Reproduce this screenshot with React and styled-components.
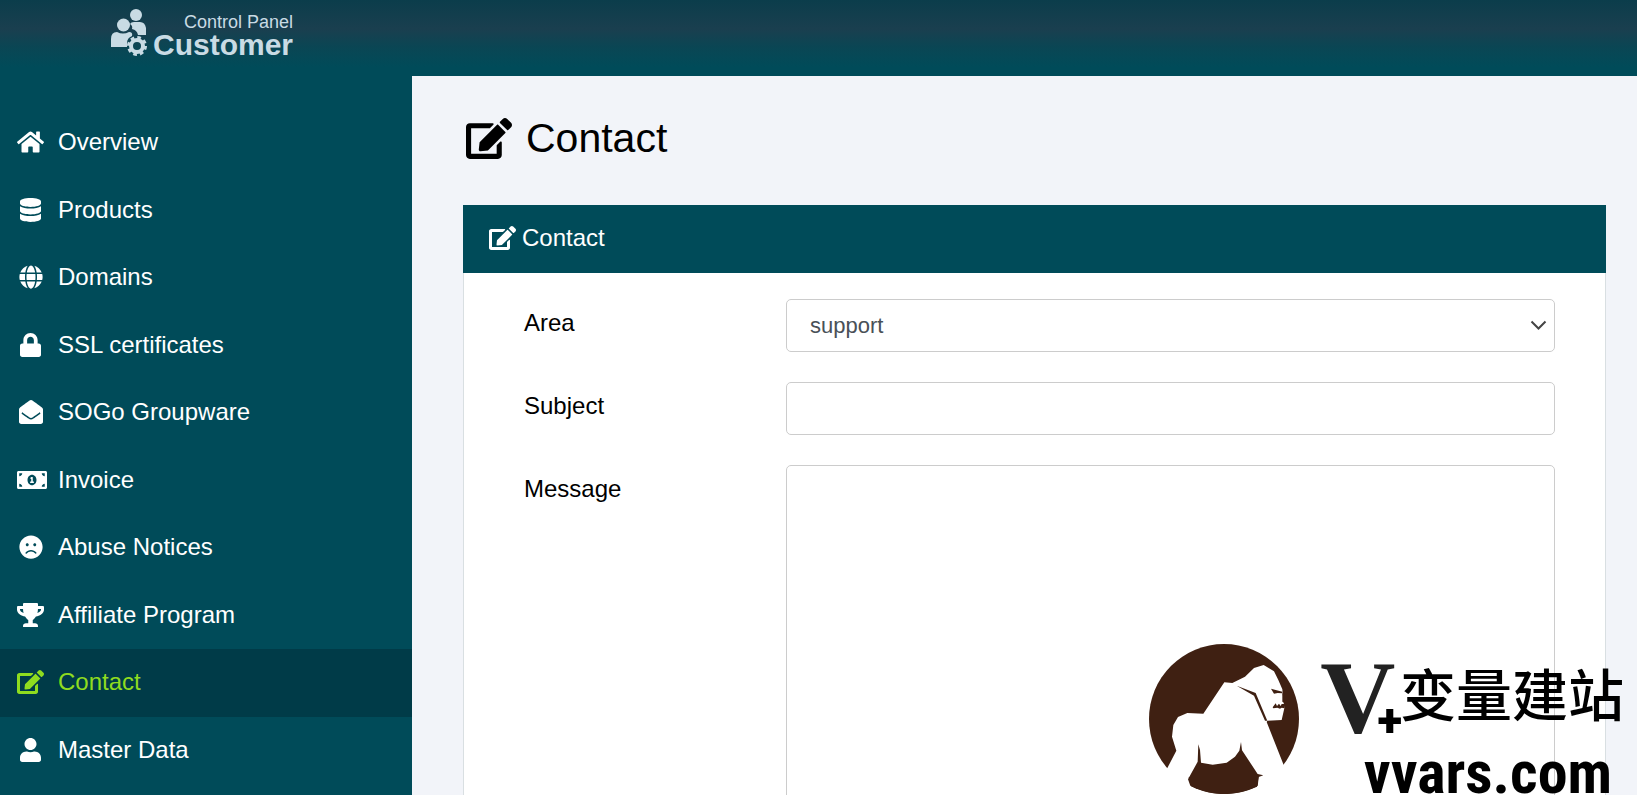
import React, { useState } from "react";
import styled, { createGlobalStyle } from "styled-components";
import {
  FaHome,
  FaDatabase,
  FaGlobe,
  FaLock,
  FaEnvelopeOpen,
  FaMoneyBillAlt,
  FaFrown,
  FaTrophy,
  FaEdit,
  FaUser,
} from "react-icons/fa";

const GlobalStyle = createGlobalStyle`
  * {
    box-sizing: border-box;
  }

  body {
    margin: 0;
    background: #f2f4f9;
    color: #000;
    font-family: "Liberation Sans", Arial, sans-serif;
    font-size: 24px;
    line-height: 28px;
  }
`;

const Page = styled.div`
  height: 100vh;
  display: flex;
  flex-direction: column;
  overflow: hidden;
`;

const TopBar = styled.header`
  flex: none;
  height: 76px;
  padding: 9px 111px;
  background: linear-gradient(#0b3d4b 0%, #1a3f4f 38%, #0a4654 62%, #004b59 88%);
`;

const Brand = styled.a`
  display: inline-flex;
  color: #c9dbe4;
  text-decoration: none;
`;

const BrandIcon = styled.svg`
  width: 36px;
  height: 47px;
  margin-right: 6px;
`;

const BrandText = styled.span`
  display: flex;
  flex-direction: column;
  align-items: flex-end;
  padding-top: 3px;
`;

const BrandSmall = styled.span`
  font-size: 18px;
  line-height: 20px;
`;

const BrandBig = styled.span`
  font-size: 30px;
  font-weight: bold;
  line-height: 26px;
`;

const Body = styled.div`
  flex: 1;
  min-height: 0;
  display: flex;
`;

const Sidebar = styled.nav`
  flex: none;
  width: 412px;
  padding-top: 33px;
  background: #004b59;
  overflow: hidden;
`;

const Menu = styled.ul`
  display: grid;
  grid-auto-rows: 1fr;
  min-height: 675px;
  margin: 0;
  padding: 0;
  list-style: none;
`;

const MenuLink = styled.a`
  height: 100%;
  display: flex;
  align-items: center;
  gap: 14px;
  padding: 0 17px 1px;
  color: ${(props) => (props.$active ? "#8fdc1f" : "#fff")};
  background: ${(props) => (props.$active ? "#003b48" : "none")};
  text-decoration: none;
`;

const MenuIcon = styled.span`
  flex: none;
  width: 27px;
  display: flex;
  justify-content: ${(props) => (props.$width > 27 ? "flex-start" : "center")};

  svg {
    flex: none;
    width: ${(props) => props.$width}px;
    height: 24px;
  }
`;

const Main = styled.main`
  flex: 1;
  min-width: 0;
  padding: 35px 31px 36px 51px;
  overflow-y: auto;
  scrollbar-width: none;
`;

const Title = styled.h1`
  display: flex;
  align-items: center;
  gap: 14px;
  margin: 0 0 40px;
  padding-left: 3px;
  font-size: 41px;
  font-weight: normal;
  line-height: 54px;

  svg {
    width: 46px;
    height: 41px;
  }
`;

const Card = styled.section`
  background: #fff;
  border: 1px solid #d9dfe2;
  border-top: 0;
`;

const CardHeader = styled.h2`
  display: flex;
  align-items: center;
  gap: 6px;
  height: 68px;
  margin: 0 -1px;
  padding: 0 26px 2px;
  background: #004b59;
  color: #fff;
  font-size: 24px;
  font-weight: normal;

  svg {
    width: 27px;
    height: 24px;
  }
`;

const Form = styled.form`
  display: grid;
  gap: 30px;
  padding: 26px 50px 30px 60px;
`;

const Row = styled.div`
  display: grid;
  grid-template-columns: 262px 1fr;
`;

const Label = styled.label`
  padding-top: 10px;
`;

const SelectWrap = styled.div`
  position: relative;

  svg {
    position: absolute;
    top: 20px;
    right: 8px;
    width: 17px;
    height: 12px;
    pointer-events: none;
  }
`;

const Select = styled.select`
  display: block;
  width: 100%;
  height: 53px;
  padding: 0 23px;
  appearance: none;
  background: #fff;
  border: 1px solid #ccc;
  border-radius: 5px;
  color: #495057;
  font: 22px "Liberation Sans", Arial, sans-serif;
`;

const Input = styled.input`
  width: 100%;
  height: 53px;
  padding: 0 23px;
  border: 1px solid #ccc;
  border-radius: 5px;
  color: #495057;
  font: 22px "Liberation Sans", Arial, sans-serif;
`;

const TextArea = styled.textarea`
  display: block;
  width: 100%;
  height: 420px;
  padding: 12px 23px;
  border: 1px solid #ccc;
  border-radius: 5px;
  color: #495057;
  font: 22px "Liberation Sans", Arial, sans-serif;
  resize: none;
`;

const Watermark = styled.div`
  position: fixed;
  right: 13px;
  bottom: 0;
  height: 151px;
  display: flex;
  gap: 21px;
  color: #000;
  pointer-events: none;
`;

const Gorilla = styled.svg`
  flex: none;
  width: 150px;
  height: 150px;
`;

const WatermarkText = styled.div`
  display: flex;
  flex-direction: column;
  align-items: flex-end;
`;

const WatermarkName = styled.div`
  display: flex;
  height: 99px;
`;

const BigV = styled.span`
  color: #222;
  font: bold 104px/106px "Liberation Serif", serif;
`;

const Plus = styled.span`
  align-self: flex-end;
  margin-left: -18px;
  font: 900 46px/46px "Roboto", "Liberation Sans", sans-serif;
`;

const Hanzi = styled.span`
  margin-left: -2px;
  font: 500 56px/96px "Noto Sans CJK SC", sans-serif;
`;

const Domain = styled.span`
  margin-right: 12px;
  font: bold 60px/60px "Liberation Sans Narrow", "Roboto Condensed", sans-serif;
`;

const links = [
  { name: "Overview", icon: FaHome, width: 27 },
  { name: "Products", icon: FaDatabase, width: 21 },
  { name: "Domains", icon: FaGlobe, width: 24 },
  { name: "SSL certificates", icon: FaLock, width: 21 },
  { name: "SOGo Groupware", icon: FaEnvelopeOpen, width: 24 },
  { name: "Invoice", icon: FaMoneyBillAlt, width: 30 },
  { name: "Abuse Notices", icon: FaFrown, width: 24 },
  { name: "Affiliate Program", icon: FaTrophy, width: 27 },
  { name: "Contact", icon: FaEdit, width: 27, active: true },
  { name: "Master Data", icon: FaUser, width: 21 },
];

const Header = () => (
  <TopBar>
    <Brand href="#home">
      <BrandIcon viewBox="0 0 36 47" fill="currentColor" aria-hidden="true">
        <circle cx="25" cy="6" r="6" />
        <path d="M19 15q1-2 4-2h6q5 0 6 6v7h-8q-1-5-6-6 1-3-2-5z" />
        <circle cx="12.5" cy="16" r="6.5" />
        <path d="M0 38V30q0-7 6-7 6 3 12 0 4 0 3 4-5 2-5 7v4z" />
        <circle cx="26" cy="37" r="6" fill="none" stroke="currentColor" strokeWidth="4" />
        <circle cx="26" cy="37" r="8.5" fill="none" stroke="currentColor" strokeWidth="3" strokeDasharray="3.6 3.08" />
      </BrandIcon>
      <BrandText>
        <BrandSmall>Control Panel</BrandSmall>
        <BrandBig>Customer</BrandBig>
      </BrandText>
    </Brand>
  </TopBar>
);

const SideMenu = () => (
  <Sidebar>
    <Menu>
      {links.map(({ name, icon: Icon, width, active }) => (
        <li key={name}>
          <MenuLink href="#menu" $active={active}>
            <MenuIcon $width={width}>
              <Icon />
            </MenuIcon>
            {name}
          </MenuLink>
        </li>
      ))}
    </Menu>
  </Sidebar>
);

const ContactForm = () => {
  const [area, setArea] = useState("support");
  return (
    <Form>
      <Row>
        <Label htmlFor="area">Area</Label>
        <SelectWrap>
          <Select id="area" value={area} onChange={(e) => setArea(e.target.value)}>
            <option value="support">support</option>
          </Select>
          <svg viewBox="0 0 17 12" fill="none" stroke="#444" strokeWidth="2" aria-hidden="true">
            <path d="M1.5 2.5l7 7 7-7" />
          </svg>
        </SelectWrap>
      </Row>
      <Row>
        <Label htmlFor="subject">Subject</Label>
        <Input id="subject" type="text" />
      </Row>
      <Row>
        <Label htmlFor="message">Message</Label>
        <TextArea id="message" />
      </Row>
    </Form>
  );
};

const SiteMark = () => (
  <Watermark>
    <Gorilla viewBox="57 42 450 450" aria-hidden="true">
      <circle cx="282" cy="267" r="225" fill="#3f2012" />
      <path
        d="M112 414L139 362 126 320 130 285 144 261 172 249 220 251 283 157 307 159 345 140 372 114 401 105 432 124 445 150 457 178 458 190 463 235 455 270 412 272 410 276 461 405 520 440 500 500 382 492 383 470 386 441 400 436 383 432 336 361 333 336 328 362 315 380 290 398 248 404 213 398 210 360 205 343 203 395 174 448 182 470 184 500 50 500z"
        fill="#fff"
      />
      <path d="M184 469Q280 515 381 470L386 441H176z" fill="#3f2012" />
      <path d="M320 167L377 189 412 272 405 272 372 197z" fill="#3f2012" />
      <path d="M423 176l17 5 17 4v5l-14-1-11 2zM428 232l9-12 4 8 6-7 5 7 3-6 8 0v13l-8-2-5 3-8-3-12 2zM457 190l8 2-2 27-6-4z" fill="#3f2012" />
    </Gorilla>
    <WatermarkText>
      <WatermarkName>
        <BigV>V</BigV>
        <Plus>+</Plus>
        <Hanzi>变量建站</Hanzi>
      </WatermarkName>
      <Domain>vvars.com</Domain>
    </WatermarkText>
  </Watermark>
);

const App = () => {
  return (
    <>
      <GlobalStyle />
      <Page>
        <Header />
        <Body>
          <SideMenu />
          <Main>
            <Title>
              <FaEdit />
              Contact
            </Title>
            <Card>
              <CardHeader>
                <FaEdit />
                Contact
              </CardHeader>
              <ContactForm />
            </Card>
          </Main>
        </Body>
      </Page>
      <SiteMark />
    </>
  );
};

export default App;
